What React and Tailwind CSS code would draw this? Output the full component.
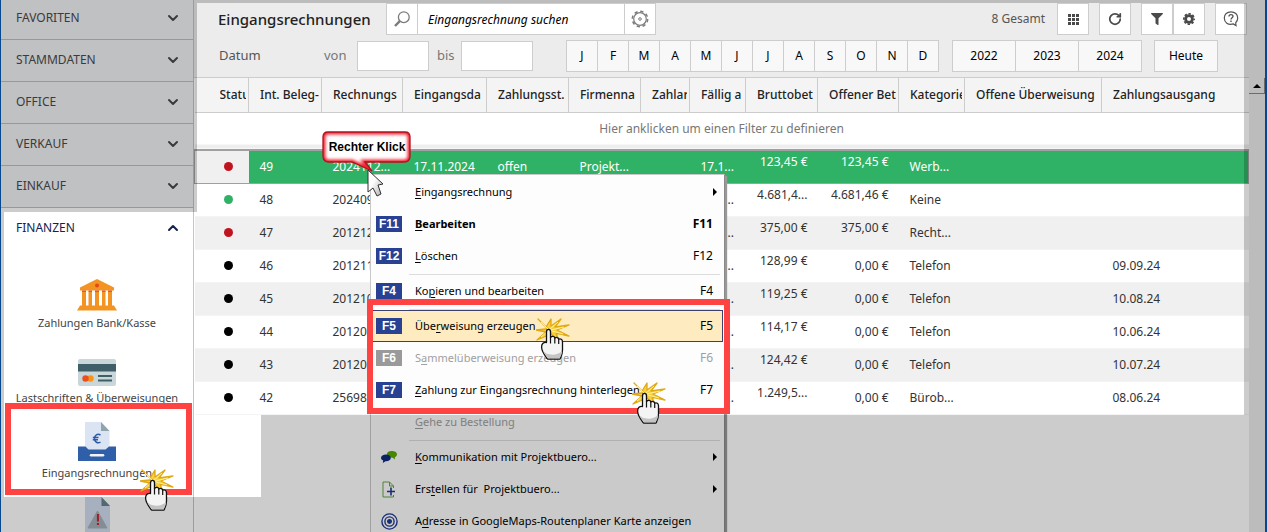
import React, { useState } from 'react';
import { ChevronDown, ChevronUp, RotateCw } from 'lucide-react';
import { FaFilter } from 'react-icons/fa';

const SECTIONS = ['FAVORITEN', 'STAMMDATEN', 'OFFICE', 'VERKAUF', 'EINKAUF'];

const MONTHS = ['J', 'F', 'M', 'A', 'M', 'J', 'J', 'A', 'S', 'O', 'N', 'D'];
const YEARS = ['2022', '2023', '2024'];

const COLUMNS = [
  { label: 'Status', width: 'w-[54px]', pad: 'pl-[25px]' },
  { label: 'Int. Beleg-', width: 'w-[73px]', pad: 'pl-[11px]' },
  { label: 'Rechnungs', width: 'w-[81px]', pad: 'pl-[11px]' },
  { label: 'Eingangsda', width: 'w-[84px]', pad: 'pl-[11px]' },
  { label: 'Zahlungsst.', width: 'w-[82px]', pad: 'pl-[11px]' },
  { label: 'Firmenna', width: 'w-[72px]', pad: 'pl-[11px]' },
  { label: 'Zahlart', width: 'w-[49px]', pad: 'pl-[11px]' },
  { label: 'Fällig a', width: 'w-[56px]', pad: 'pl-[11px]' },
  { label: 'Bruttobet', width: 'w-[72px]', pad: 'pl-[11px]' },
  { label: 'Offener Bet', width: 'w-[81px]', pad: 'pl-[11px]' },
  { label: 'Kategorie', width: 'w-[66px]', pad: 'pl-[11px]' },
  { label: 'Offene Überweisung', width: 'w-[137px]', pad: 'pl-[11px]' },
  { label: 'Zahlungsausgang', width: '', pad: 'pl-[11px]' },
];

const INVOICES = [
  { dot: 'bg-[#c1121f]', nr: '49', rechnung: '2024112...', eingang: '17.11.2024', status: 'offen', firma: 'Projekt...', faellig: '17.1...', brutto: '123,45 €', offen: '123,45 €', kategorie: 'Werb...', ausgang: '', selected: true },
  { dot: 'bg-[#30b266]', nr: '48', rechnung: '202409...', faellig: '17.1...', brutto: '4.681,4...', offen: '4.681,46 €', kategorie: 'Keine', ausgang: '' },
  { dot: 'bg-[#c1121f]', nr: '47', rechnung: '201212...', faellig: '17.1...', brutto: '375,00 €', offen: '375,00 €', kategorie: 'Recht...', ausgang: '' },
  { dot: 'bg-black', nr: '46', rechnung: '201211...', faellig: '17.1...', brutto: '128,99 €', offen: '0,00 €', kategorie: 'Telefon', ausgang: '09.09.24' },
  { dot: 'bg-black', nr: '45', rechnung: '201210...', faellig: '17.1...', brutto: '119,25 €', offen: '0,00 €', kategorie: 'Telefon', ausgang: '10.08.24' },
  { dot: 'bg-black', nr: '44', rechnung: '201208...', faellig: '17.1...', brutto: '114,17 €', offen: '0,00 €', kategorie: 'Telefon', ausgang: '10.06.24' },
  { dot: 'bg-black', nr: '43', rechnung: '201207...', faellig: '17.1...', brutto: '124,42 €', offen: '0,00 €', kategorie: 'Telefon', ausgang: '10.07.24' },
  { dot: 'bg-black', nr: '42', rechnung: '256987...', faellig: '17.1...', brutto: '1.249,5...', offen: '0,00 €', kategorie: 'Bürob...', ausgang: '08.06.24' },
];

// pre / key / post split the label around its underlined access key
const MENU = [
  { pre: '', key: 'E', post: 'ingangsrechnung', arrow: true },
  { pre: '', key: 'B', post: 'earbeiten', fkey: 'F11', bold: true },
  { pre: '', key: 'L', post: 'öschen', fkey: 'F12' },
  { separator: true },
  { pre: 'Ko', key: 'p', post: 'ieren und bearbeiten', fkey: 'F4' },
  { separator: true },
  { pre: 'Übe', key: 'r', post: 'weisung erzeugen', fkey: 'F5', active: true },
  { pre: 'S', key: 'a', post: 'mmelüberweisung erzeugen', fkey: 'F6', disabled: true },
  { pre: '', key: 'Z', post: 'ahlung zur Eingangsrechnung hinterlegen', fkey: 'F7' },
  { pre: '', key: 'G', post: 'ehe zu Bestellung', disabled: true },
  { separator: true },
  { pre: '', key: 'K', post: 'ommunikation mit Projektbuero...', icon: ChatIcon, arrow: true },
  { pre: 'Ers', key: 't', post: 'ellen für  Projektbuero...', icon: NewDocIcon, arrow: true },
  { pre: 'A', key: 'd', post: 'resse in GoogleMaps-Routenplaner Karte anzeigen', icon: TargetIcon },
];

function ChatIcon() {
  return (
    <svg width="16" height="14" viewBox="0 0 16 14">
      <path d="M10.500 1C13.500 1 16 2.200 16 4.300C16 5.700 15.100 6.700 13.800 7.200L14 9.500L11.700 7.700C8.500 7.800 5.800 6.600 5.800 4.300C5.800 2.200 8 1 10.500 1Z" fill="#58a800" />
      <path d="M5 4.500C8 4.500 9.800 5.900 9.800 8C9.800 10 7.800 11.200 5.200 11.200H4.500L1.800 13L2.200 10.500C.9 9.900 0 9.100 0 8C0 5.800 2.200 4.500 5 4.500Z" fill="#0e2a80" />
    </svg>
  );
}

function NewDocIcon() {
  return (
    <svg width="14" height="17" viewBox="0 0 14 17" fill="none">
      <path d="M11.500 7V5L7.500 1H1V16H11.500V14" stroke="#5fa545" />
      <path d="M7.500 1V5H11.500" stroke="#5fa545" />
      <path d="M9 6.500V14.500M5 10.500H13" stroke="#1f3a93" strokeWidth="1.600" />
    </svg>
  );
}

function TargetIcon() {
  return (
    <svg width="17" height="17" viewBox="0 0 17 17" fill="none" stroke="#1f3a93" strokeWidth="1.400">
      <circle cx="8.500" cy="8.500" r="7.600" />
      <circle cx="8.500" cy="8.500" r="4.600" />
      <circle cx="8.500" cy="8.500" r="1.800" fill="#1f3a93" />
    </svg>
  );
}

function BankIcon() {
  return (
    <svg width="40" height="32" viewBox="0 0 40 32">
      <path d="M20 0L37 8.500V11.500H3V8.500Z" fill="#f39322" />
      <circle cx="20" cy="6.500" r="2" fill="#e2491d" />
      <path d="M5 12H9V27H5ZM11.500 12H15V27H11.500ZM18 12H22V27H18ZM25 12H28.500V27H25ZM31 12H35V27H31Z" fill="#f39322" />
      <path d="M5 11.500H9V12.700H5ZM11.500 11.500H15V12.700H11.500ZM18 11.500H22V12.700H18ZM25 11.500H28.500V12.700H25ZM31 11.500H35V12.700H31Z" fill="#e2491d" />
      <path d="M3 26.500H37L40 31.500H0Z" fill="#f39322" />
    </svg>
  );
}

function CardIcon() {
  return (
    <svg width="38" height="27" viewBox="0 0 38 27">
      <rect width="38" height="27" rx="2" fill="#c9d6da" />
      <rect y="5" width="38" height="7.500" fill="#3f5f68" />
      <circle cx="12.500" cy="19.500" r="3.200" fill="#f7941e" />
      <circle cx="7.500" cy="19.500" r="3.200" fill="#e9501e" />
      <path d="M20 17H34M20 21.500H34" stroke="#3f5f68" strokeWidth="2" />
    </svg>
  );
}

function InvoiceIcon() {
  return (
    <svg width="38" height="39" viewBox="0 0 38 39">
      <path d="M7 0H23L31.500 9V30H7Z" fill="#dbe4f2" />
      <path d="M23 0L31.500 9H23Z" fill="#8fa5ab" />
      <path d="M22.500 13C19.500 11.300 16.500 13 16.500 16.500C16.500 20 19.500 21.800 22.500 20.200M14.800 15.500H20.500M14.800 17.800H20" fill="none" stroke="#2c5aa8" strokeWidth="1.500" />
      <path d="M0 24.500H7.500L10.500 27.500H27.500L31 24.500H38V39H0Z" fill="#2f5fa8" />
      <path d="M13 33.200H25" stroke="#f1f4f9" strokeWidth="2.500" strokeLinecap="round" />
    </svg>
  );
}

function ReminderIcon() {
  return (
    <svg width="25" height="39" viewBox="0 0 25 39">
      <path d="M0 0H16.500L25 9V39H0Z" fill="#d1dcef" />
      <path d="M16.500 0L25 9H16.500Z" fill="#68838b" />
      <path d="M12.500 14L22 31H3Z" fill="#a6b1b8" stroke="#a6b1b8" strokeLinejoin="round" />
      <path d="M12.900 17V24.500M12.900 26V28" stroke="#d01f2e" strokeWidth="2" />
    </svg>
  );
}

function SearchIcon() {
  return (
    <svg width="16" height="16" viewBox="0 0 16 16" fill="none" stroke="#7b7b7b">
      <circle cx="9.800" cy="6.200" r="5.400" strokeWidth="1.300" />
      <path d="M5.800 10.200L1 15" strokeWidth="2.400" />
    </svg>
  );
}

function GearOutlineIcon() {
  return (
    <svg width="18" height="18" viewBox="0 0 18 18" fill="none" stroke="#7b7b7b">
      <circle cx="9" cy="9" r="7.700" strokeWidth="1.500" strokeDasharray="3.300 2.750" />
      <circle cx="9" cy="9" r="6.300" strokeWidth="1.200" />
      <circle cx="9" cy="9" r="1.300" strokeWidth="1" />
    </svg>
  );
}

function GearIcon() {
  return (
    <svg width="12" height="12" viewBox="0 0 12 12" fill="none" stroke="#4a4a4a">
      <circle cx="6" cy="6" r="3.400" strokeWidth="2.800" />
      <circle cx="6" cy="6" r="5.200" strokeWidth="1.600" strokeDasharray="2.400 1.684" strokeDashoffset="1.200" />
    </svg>
  );
}

function GridIcon() {
  return (
    <svg width="11" height="11" viewBox="0 0 11 11" fill="#4a4a4a">
      {[0, 4, 8].map((y) =>
        [0, 4, 8].map((x) => <rect key={`${x}-${y}`} x={x} y={y} width="3" height="3" />)
      )}
    </svg>
  );
}

function HelpIcon() {
  return (
    <svg width="16" height="16" viewBox="0 0 16 16" fill="none" stroke="#555" strokeWidth="1.200">
      <path d="M8 .8C12 .8 14.700 3.300 14.700 7C14.700 9 14 10.500 12.700 11.700L13 14.500L10.300 12.900C5 14.500 1.300 11.300 1.300 7C1.300 3.300 4 .8 8 .8Z" />
      <path d="M6 5.500C6 3 10 3 10 5.300C10 6.800 8 6.800 8 8.600M8 9.600V11" strokeWidth="1.400" />
    </svg>
  );
}

function ClickHand({ className }) {
  return (
    <svg className={`absolute z-40 ${className}`} width="34" height="44" viewBox="0 0 34 44">
      <path
        d="M13 12L2 1L10 9L15 1L15 8L25 1L19 9L33 7L21 12L33 18L20 15L23 23L15 16L1 22L10 14L0 12L10 11Z"
        fill="#f8cf3f"
        stroke="#dfa90f"
        strokeWidth="1.300"
        strokeLinejoin="round"
      />
      <path d="M13 12L5 4M14 11L22 4M15 12L28 9M16 13L27 16M12 13L5 19" stroke="#fff0a0" strokeWidth="1" />
      <path
        d="M10.500 14C10.500 10.500 14.500 10.500 14.500 14V19.500C16 17.800 18.600 18.300 18.800 20C20.300 18.800 22.600 19.500 22.700 21.200C24.600 20.300 26.500 21.400 26.500 24V32C26.500 36.500 25 38.500 24 41H11.500C9.500 38 6 34.500 5.600 29.500C5.400 26 7.200 24.200 10.500 24.500Z"
        fill="#f4f4f4"
        stroke="#111"
        strokeWidth="1.300"
        strokeLinejoin="round"
      />
      <path d="M7 32C9 37 20 39 26 33C26 37 24.500 38 23.700 40.400H12C10.500 38 8 36 7 32Z" fill="#c4c4c4" />
      <path d="M14.500 19V25.500M18.800 20V25.500M22.700 21V26" stroke="#111" strokeWidth="1.200" />
    </svg>
  );
}

function Callout() {
  return (
    <div className="absolute left-[322px] top-[131px] z-40">
      <svg width="90" height="66" viewBox="0 0 90 66" className="block">
        <defs>
          <linearGradient id="arrowFill" x1="0" y1="0" x2="1" y2="1">
            <stop offset="0.400" stopColor="#fff" />
            <stop offset="1" stopColor="#aaa" />
          </linearGradient>
          <filter id="glow" x="-10%" y="-10%" width="120%" height="120%">
            <feGaussianBlur stdDeviation="1.500" />
          </filter>
          <clipPath id="bubble">
            <path d="M6 1H83Q88 1 88 6V25Q88 31 82 31H43L50 40L30 31H7Q1 31 1 25V6Q1 1 6 1Z" />
          </clipPath>
        </defs>
        <path d="M6 1H83Q88 1 88 6V25Q88 31 82 31H43L50 40L30 31H7Q1 31 1 25V6Q1 1 6 1Z" fill="#fff" />
        <g clipPath="url(#bubble)">
          <path d="M6 1H83Q88 1 88 6V25Q88 31 82 31H43L50 40L30 31H7Q1 31 1 25V6Q1 1 6 1Z" fill="none" stroke="#f02030" strokeWidth="5" filter="url(#glow)" />
        </g>
        <path d="M6 1H83Q88 1 88 6V25Q88 31 82 31H43L50 40L30 31H7Q1 31 1 25V6Q1 1 6 1Z" fill="none" stroke="#b0101c" strokeWidth="1.300" />
        <path d="M46 39L46 61L51 57L55 65L59 63L56 54L61 53Z" fill="url(#arrowFill)" stroke="#333" strokeWidth="1" strokeLinejoin="round" />
      </svg>
      <span className="absolute left-0 top-[7px] w-[90px] text-center font-['Liberation_Sans',sans-serif] text-xs leading-[18px] font-bold whitespace-nowrap text-black">
        Rechter Klick
      </span>
    </div>
  );
}

function Sidebar() {
  const tiles = [
    { label: 'Zahlungen Bank/Kasse', Icon: BankIcon },
    { label: 'Lastschriften & Überweisungen', Icon: CardIcon },
    { label: 'Eingangsrechnungen', Icon: InvoiceIcon },
  ];

  return (
    <aside className="flex w-[194px] shrink-0 flex-col border-r border-l border-r-[#c4c4c4] border-l-[#0a5ab4] bg-white">
      {SECTIONS.map((name, idx) => (
        <button
          key={name}
          type="button"
          className={`flex shrink-0 items-center justify-between border-b border-[#bfbfbf] bg-[#f1f2f4] pr-3 pl-[15px] text-xs text-[#4a4a4a] ${idx === 0 ? 'h-10 pb-1' : 'h-[42px] pb-0.5'}`}
        >
          {name}
          <ChevronDown className="h-4 w-4" strokeWidth={3} />
        </button>
      ))}
      <button type="button" className="flex h-[42px] shrink-0 items-center justify-between pr-3 pb-0.5 pl-[15px] text-xs text-[#14224e]">
        FINANZEN
        <ChevronUp className="h-4 w-4" strokeWidth={3} />
      </button>
      <nav className="flex flex-col pt-[21px]">
        {tiles.map(({ label, Icon }) => (
          <a key={label} href="#" className="flex h-[75px] shrink-0 flex-col items-center text-[11px] text-[#444]">
            <span className="flex h-10 items-end">
              <Icon />
            </span>
            <span className="mt-1 leading-4 whitespace-nowrap">{label}</span>
          </a>
        ))}
        <a href="#" aria-label="Mahnungen" className="flex h-10 shrink-0 items-end justify-center">
          <ReminderIcon />
        </a>
      </nav>
    </aside>
  );
}

function IconButton({ label, children, className = '' }) {
  return (
    <button type="button" aria-label={label} className={`flex h-8 w-8 items-center justify-center border border-[#cdcdcd] bg-white text-[#4a4a4a] ${className}`}>
      {children}
    </button>
  );
}

function Toolbar() {
  const [query, setQuery] = useState('');

  return (
    <header className="flex flex-col gap-[5px] border-b border-[#cdcdcd] bg-[#ececec] pt-[3px] pb-[5px]">
      <div className="flex h-8 items-center pr-0.5 pl-6">
        <h1 className="w-[168px] text-[15px] font-medium text-[#222]">Eingangsrechnungen</h1>
        <IconButton label="Suchen"><SearchIcon /></IconButton>
        <input
          type="search"
          aria-label="Eingangsrechnung suchen"
          placeholder="Eingangsrechnung suchen"
          value={query}
          onChange={(e) => setQuery(e.target.value)}
          className="h-8 w-[206px] border-y border-[#cdcdcd] bg-white pl-2.5 text-xs italic placeholder:text-black"
        />
        <IconButton label="Sucheinstellungen"><GearOutlineIcon /></IconButton>
        <span className="ml-auto text-xs text-[#555]">8 Gesamt</span>
        <div className="ml-3 flex gap-2.5">
          <IconButton label="Ansicht"><GridIcon /></IconButton>
          <IconButton label="Aktualisieren"><RotateCw className="h-3.5 w-3.5" strokeWidth={3} /></IconButton>
          <div className="flex">
            <IconButton label="Filter"><FaFilter className="h-3 w-3" /></IconButton>
            <IconButton label="Einstellungen"><GearIcon /></IconButton>
          </div>
          <IconButton label="Hilfe"><HelpIcon /></IconButton>
        </div>
      </div>

      <div className="flex h-8 items-center pl-[25px] text-[13px] text-[#555]">
        <span className="w-[105px]">Datum</span>
        <label htmlFor="von" className="w-[33px] text-[#777]">von</label>
        <input id="von" className="h-[30px] w-[72px] border border-[#cdcdcd] bg-white px-1" />
        <label htmlFor="bis" className="w-8 pl-2 text-[#777]">bis</label>
        <input id="bis" className="h-[30px] w-[72px] border border-[#cdcdcd] bg-white px-1" />
        <div className="ml-[33px] flex border-l border-[#cdcdcd]">
          {MONTHS.map((m, idx) => (
            <button key={idx} type="button" className="h-8 w-[31px] border-y border-r border-[#cdcdcd] bg-[#f8f8f8] text-xs text-black">{m}</button>
          ))}
        </div>
        <div className="ml-[13px] flex border-l border-[#cdcdcd]">
          {YEARS.map((y) => (
            <button key={y} type="button" className="h-8 w-[63px] border-y border-r border-[#cdcdcd] bg-[#f8f8f8] text-xs text-black">{y}</button>
          ))}
        </div>
        <button type="button" className="ml-3 h-8 w-16 border border-[#cdcdcd] bg-[#f8f8f8] text-xs text-black">Heute</button>
      </div>
    </header>
  );
}

function InvoiceTable() {
  return (
    <table className="w-full table-fixed border-collapse text-left text-xs text-[#333]">
      <thead>
        <tr className="h-[34px] bg-[#f4f4f4]">
          {COLUMNS.map((col) => (
            <th key={col.label} className={`border-r border-b border-[#cdcdcd] p-0 pr-0.5 font-medium text-[#222] last:border-r-0 ${col.width} ${col.pad}`}>
              <div className="overflow-hidden whitespace-nowrap">{col.label}</div>
            </th>
          ))}
        </tr>
      </thead>
      <tbody>
        <tr className="h-[38px]">
          <td colSpan={13} className="border-b-2 border-[#a0a0a0] bg-linear-to-b from-white from-90% to-[#eee] to-90% p-0 pb-1 text-center text-[#777]">
            Hier anklicken um einen Filter zu definieren
          </td>
        </tr>
        {INVOICES.map((inv) => {
          const raised = inv.offen !== '0,00 €';
          return (
            <tr
              key={inv.nr}
              className={`h-[33px] ${inv.selected ? 'border border-[#a0a0a0] bg-[#30b266] text-white' : 'border-b border-[#f4f4f4] odd:bg-white even:bg-white nth-[4n]:bg-[#f0f0f0] nth-[4n+2]:bg-[#f0f0f0]'}`}
            >
              <td className={`p-0 pl-[29px] ${inv.selected ? 'bg-[#f0f0f0]' : ''}`}>
                <span className={`block h-[9px] w-[9px] rounded-full ${inv.dot}`}></span>
              </td>
              <td className="p-0 pl-[11px]">{inv.nr}</td>
              <td className="p-0 pl-[11px] whitespace-nowrap">{inv.rechnung}</td>
              <td className="p-0 pl-[11px]">{inv.eingang}</td>
              <td className="p-0 pl-[11px]">{inv.status}</td>
              <td className="p-0 pl-[11px]">{inv.firma}</td>
              <td className="p-0"></td>
              <td className="p-0 pl-[11px]">{inv.faellig}</td>
              <td className="p-0 pr-2.5 pb-2.5 text-right whitespace-nowrap">{inv.brutto}</td>
              <td className={`p-0 pr-2.5 text-right whitespace-nowrap ${raised ? 'pb-2.5' : ''}`}>{inv.offen}</td>
              <td className="p-0 pl-[11px]">{inv.kategorie}</td>
              <td className="p-0"></td>
              <td className="p-0 pl-[11px]">{inv.ausgang}</td>
            </tr>
          );
        })}
      </tbody>
    </table>
  );
}

function ContextMenu() {
  return (
    <div role="menu" className="absolute top-[174px] left-[370px] z-10 w-[355px] border border-[#c8c8c8] border-r-[#8a8a8a] bg-[#fdfdfd] py-px shadow-[2px_2px_1px_#999]">
      {MENU.map((item, idx) => {
        if (item.separator) {
          return <div key={idx} role="separator" className="mr-1 ml-[38px] h-[3px] border-b border-[#dcdcdc]"></div>;
        }
        const Icon = item.icon;
        return (
          <button
            key={idx}
            type="button"
            role="menuitem"
            disabled={item.disabled}
            className={`flex h-8 w-[352px] items-center border pr-[9px] pl-1 text-left text-[11px] ${item.active ? 'border-[#3f3f6e] bg-[#feebc0]' : 'border-transparent'} ${item.disabled ? 'text-[#a0a0a0]' : 'text-black'} ${item.bold ? 'font-bold' : ''}`}
          >
            <span className="flex w-[39px] shrink-0 items-center">
              {item.fkey && (
                <span className={`flex h-4 w-[26px] items-center justify-center font-['Liberation_Sans',sans-serif] text-xs font-bold text-white ${item.disabled ? 'bg-[#9a9a9a]' : 'bg-[#284193]'}`}>
                  {item.fkey}
                </span>
              )}
              {Icon && <span className="flex w-[26px] justify-center"><Icon /></span>}
            </span>
            <span className="whitespace-pre">
              {item.pre}
              <span className="underline underline-offset-2">{item.key}</span>
              {item.post}
            </span>
            {item.fkey && <span className="ml-auto text-xs">{item.fkey}</span>}
            {item.arrow && <span className="-mr-1 ml-auto h-0 w-0 border-y-4 border-l-4 border-y-transparent border-l-black"></span>}
          </button>
        );
      })}
    </div>
  );
}

export default function App() {
  return (
    <div className="relative flex h-screen overflow-hidden bg-white font-['Noto_Sans','Open_Sans',sans-serif]">
      <Sidebar />
      <main className="min-w-0 flex-1">
        <Toolbar />
        <InvoiceTable />
      </main>
      <div className="flex w-[18px] shrink-0 flex-col border-r-2 border-[#0a5ab4] bg-[#ebebeb] pt-[78px]">
        <button type="button" aria-label="Nach oben" className="flex h-4 w-4 items-center justify-center border-r border-b border-[#888]">
          <span className="h-0 w-0 border-x-4 border-b-4 border-x-transparent border-b-black"></span>
        </button>
      </div>

      <ContextMenu />

      {/* Dimmed layer with the tutorial area left open */}
      <div className="pointer-events-none absolute inset-0 z-20 bg-black/20 [clip-path:polygon(evenodd,0_0,100%_0,100%_100%,0_100%,0_0,197px_3px,calc(100%-23px)_3px,calc(100%-23px)_415px,261px_415px,261px_497px,4px_497px,4px_212px,197px_212px,197px_3px,0_0)]"></div>

      <div className="pointer-events-none absolute top-[403px] left-[5px] z-30 h-[92px] w-[187px] border-6 border-[#ff4343]"></div>
      <div className="pointer-events-none absolute top-[299px] left-[367px] z-30 h-[115px] w-[363px] border-6 border-[#ff4343]"></div>

      <Callout />
      <ClickHand className="top-[469px] left-[140px]" />
      <ClickHand className="top-[318px] left-[536px]" />
      <ClickHand className="top-[382px] left-[632px]" />
    </div>
  );
}
